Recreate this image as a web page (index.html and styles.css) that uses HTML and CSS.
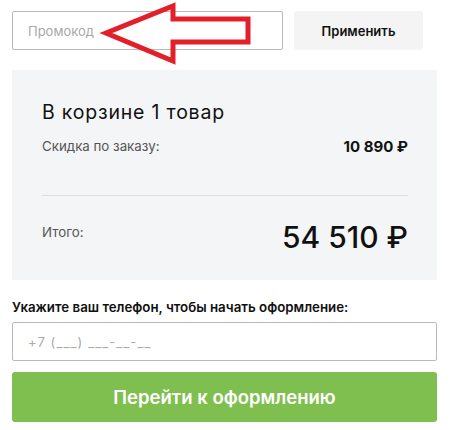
FILE: index.html
```html
<!DOCTYPE html>
<html lang="ru">
<head>
<meta charset="utf-8">
<link rel="stylesheet" href="styles.css">
</head>
<body>
<div class="page">
  <div class="promo-row">
    <div class="promo-input">Промокод</div>
    <div class="promo-btn">Применить</div>
  </div>
  <div class="card">
    <div class="title">В корзине 1 товар</div>
    <div class="row discount">
      <span class="label">Скидка по заказу:</span>
      <span class="value">10 890 ₽</span>
    </div>
    <div class="divider"></div>
    <div class="row total">
      <span class="label">Итого:</span>
      <span class="big">54 510 ₽</span>
    </div>
  </div>
  <div class="phone-label">Укажите ваш телефон, чтобы начать оформление:</div>
  <div class="phone-input">+7 (___) ___-__-__</div>
  <div class="go-btn">Перейти к оформлению</div>
  <svg class="arrow" width="450" height="70" viewBox="0 0 450 70">
    <polygon points="106,33 173,6 173,19 248,19 248,42 173,42 173,61" fill="none" stroke="#e3202a" stroke-width="5" stroke-linejoin="miter"/>
  </svg>
</div>
</body>
</html>
```

FILE: styles.css
```css
html, body {
  margin: 0;
  padding: 0;
  background: #fff;
}
body {
  font-family: Inter, "Noto Sans", sans-serif;
  color: #111;
}
.page {
  position: relative;
  width: 450px;
  height: 430px;
  padding: 11px 13px 0 12px;
  box-sizing: border-box;
}
.promo-row {
  display: flex;
  gap: 11px;
}
.promo-input {
  box-sizing: border-box;
  width: 271px;
  height: 39px;
  border: 1px solid #b9b9b9;
  border-radius: 2px;
  padding-left: 15px;
  display: flex;
  align-items: center;
  font-size: 13px;
  color: #a8a8a8;
}
.promo-btn {
  width: 129px;
  height: 39px;
  background: #f4f4f4;
  border-radius: 3px;
  display: flex;
  align-items: center;
  justify-content: center;
  font-size: 13px;
  font-weight: 600;
  color: #111;
}
.card {
  margin-top: 20px;
  height: 210px;
  background: #f4f5f7;
  box-sizing: border-box;
  padding: 30px 29px 0 30px;
}
.title {
  font-size: 19.5px;
  letter-spacing: 0.8px;
  line-height: 24px;
  color: #111;
}
.row {
  display: flex;
  justify-content: space-between;
  align-items: center;
}
.discount {
  margin-top: 13px;
  height: 18px;
}
.label {
  font-size: 13.3px;
  color: #555;
}
.value {
  font-size: 15px;
  font-weight: 700;
  color: #111;
}
.divider {
  margin-top: 40px;
  height: 1px;
  background: #dedede;
}
.total {
  margin-top: 22px;
  align-items: flex-start;
}
.total .label {
  margin-top: 6px;
}
.big {
  font-size: 30px;
  line-height: 38px;
  font-weight: 500;
  color: #111;
}
.phone-label {
  margin-top: 19px;
  font-size: 13.3px;
  font-weight: 600;
  line-height: 16px;
  color: #111;
}
.phone-input {
  margin-top: 7px;
  box-sizing: border-box;
  height: 39px;
  border: 1px solid #b9b9b9;
  border-radius: 2px;
  padding-left: 15px;
  display: flex;
  align-items: center;
  font-size: 13px;
  letter-spacing: 1.1px;
  color: #aaa;
}
.go-btn {
  margin-top: 11px;
  height: 50px;
  background: #7fbf4f;
  border-radius: 3px;
  display: flex;
  align-items: center;
  justify-content: center;
  font-size: 18.5px;
  font-weight: 600;
  color: #fff;
}
.arrow {
  position: absolute;
  left: 0;
  top: 0;
}
```
